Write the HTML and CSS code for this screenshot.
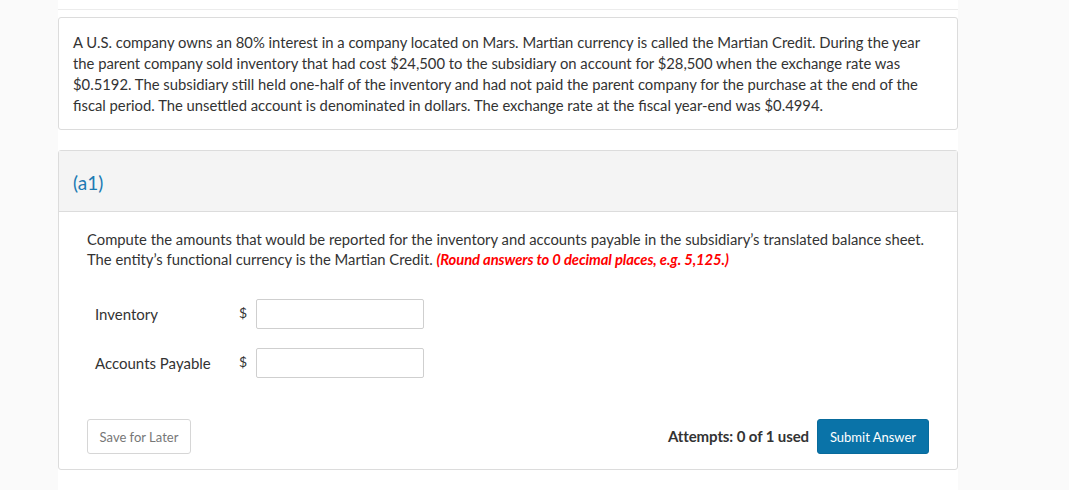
FILE: index.html
```html
<!DOCTYPE html>
<html>
<head>
<meta charset="utf-8">
<link rel="stylesheet" href="styles.css">
</head>
<body>
<div class="page">
  <div class="topbar"></div>
  <div class="card intro">
    <p>A U.S. company owns an 80% interest in a company located on Mars. Martian currency is called the Martian Credit. During the year the parent company sold inventory that had cost $24,500 to the subsidiary on account for $28,500 when the exchange rate was $0.5192. The subsidiary still held one-half of the inventory and had not paid the parent company for the purchase at the end of the fiscal period. The unsettled account is denominated in dollars. The exchange rate at the fiscal year-end was $0.4994.</p>
  </div>
  <div class="card part">
    <div class="part-head">(a1)</div>
    <div class="part-body">
      <p class="prompt">Compute the amounts that would be reported for the inventory and accounts payable in the subsidiary’s translated balance sheet. The entity’s functional currency is the Martian Credit. <em class="note">(Round answers to 0 decimal places, e.g. 5,125.)</em></p>
      <div class="rows">
        <div class="row">
          <span class="label">Inventory</span>
          <span class="cur">$</span>
          <input class="field" type="text">
        </div>
        <div class="row">
          <span class="label">Accounts Payable</span>
          <span class="cur">$</span>
          <input class="field" type="text">
        </div>
      </div>
      <div class="actions">
        <button class="btn save">Save for Later</button>
        <div class="right">
          <span class="attempts">Attempts: 0 of 1 used</span>
          <button class="btn submit">Submit Answer</button>
        </div>
      </div>
    </div>
  </div>
</div>
</body>
</html>
```

FILE: styles.css
```css
* { box-sizing: border-box; }
html, body { margin: 0; padding: 0; }
body {
  background: #fafafa;
  font-family: Lato, "Liberation Sans", sans-serif;
  color: #333;
}
.page {
  width: 900px;
  margin-left: 58px;
  background: #fff;
  min-height: 490px;
}
.topbar {
  height: 10px;
  border-bottom: 1px solid #ececec;
}
.card {
  border: 1px solid #dcdcdc;
  border-radius: 3px;
  background: #fff;
}
.intro {
  margin-top: 7px;
  padding: 14px 14px 13px 14px;
}
.intro p {
  margin: 0;
  font-size: 14.8px;
  line-height: 21px;
}
.part {
  margin-top: 20px;
}
.part-head {
  height: 61px;
  background: #f4f4f4;
  border-bottom: 1px solid #dcdcdc;
  color: #1b7ab3;
  font-size: 19px;
  padding: 20px 14px 0;
  line-height: 24px;
}
.part-body {
  padding: 17px 28px 15px 28px;
}
.prompt {
  margin: 0;
  font-size: 14.8px;
  line-height: 20px;
}
.note {
  color: #f00;
  font-weight: bold;
  font-style: italic;
  font-size: 14.8px;
  letter-spacing: -0.1px;
}
.rows {
  margin-top: 30px;
  display: flex;
  flex-direction: column;
  gap: 19px;
}
.row {
  display: flex;
  align-items: center;
  padding-left: 8px;
}
.label {
  width: 144px;
  font-size: 15px;
}
.cur {
  width: 17px;
  font-size: 14px;
  margin-top: -4px;
}
.field {
  width: 168px;
  height: 30px;
  border: 1px solid #cfcfcf;
  border-radius: 2px;
  padding: 0 6px;
  font-family: inherit;
}
.actions {
  margin-top: 41px;
  display: flex;
  justify-content: space-between;
  align-items: center;
}
.right {
  display: flex;
  align-items: center;
  gap: 8px;
}
.btn {
  height: 35px;
  font-family: Lato, "Liberation Sans", sans-serif;
  font-size: 13px;
  border-radius: 3px;
  padding: 0;
  white-space: nowrap;
  cursor: pointer;
}
.save {
  width: 104px;
  background: #fff;
  border: 1px solid #d6d6d6;
  color: #777;
}
.submit {
  width: 112px;
  background: #0a73a8;
  border: 1px solid #086b9c;
  color: #fff;
}
.attempts {
  font-size: 15px;
  font-weight: bold;
  color: #333;
  letter-spacing: -0.1px;
  margin-top: -2px;
}
```
